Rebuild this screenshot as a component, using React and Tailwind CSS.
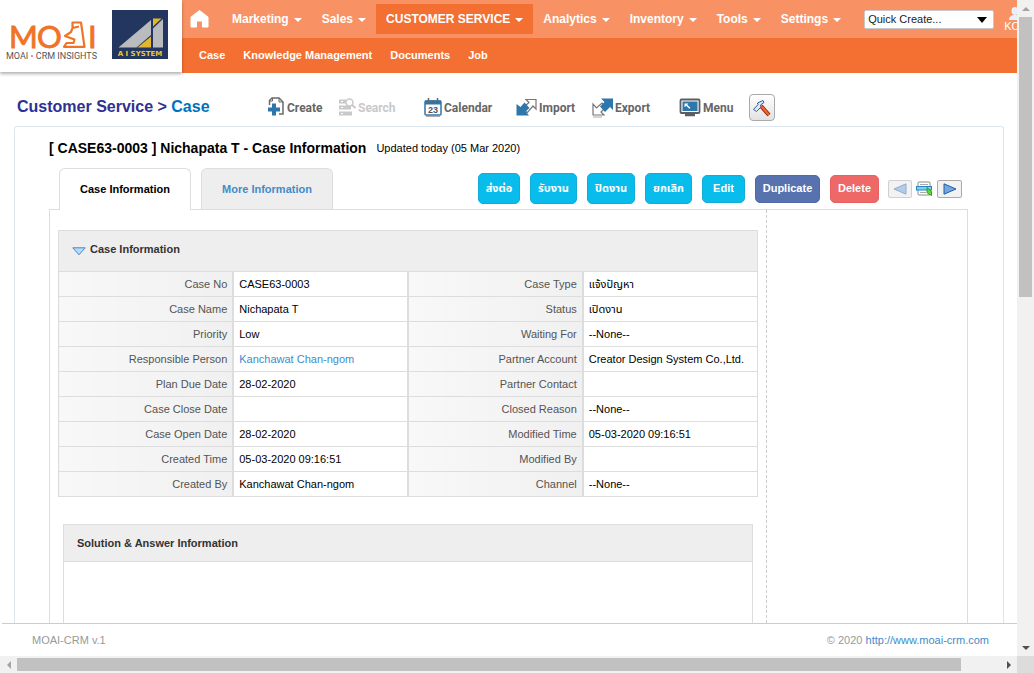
import React from "react";

const NAV = ["Marketing", "Sales", "CUSTOMER SERVICE", "Analytics", "Inventory", "Tools", "Settings"];
const SUBNAV = ["Case", "Knowledge Management", "Documents", "Job"];

const ROWS = [
  ["Case No", "CASE63-0003", "Case Type", "แจ้งปัญหา"],
  ["Case Name", "Nichapata T", "Status", "เปิดงาน"],
  ["Priority", "Low", "Waiting For", "--None--"],
  ["Responsible Person", "Kanchawat Chan-ngom", "Partner Account", "Creator Design System Co.,Ltd."],
  ["Plan Due Date", "28-02-2020", "Partner Contact", ""],
  ["Case Close Date", "", "Closed Reason", "--None--"],
  ["Case Open Date", "28-02-2020", "Modified Time", "05-03-2020 09:16:51"],
  ["Created Time", "05-03-2020 09:16:51", "Modified By", ""],
  ["Created By", "Kanchawat Chan-ngom", "Channel", "--None--"],
];

function MoaiLogo() {
  return (
    <svg width="96" height="44" viewBox="0 0 96 44" className="overflow-visible" role="img" aria-label="MOAI CRM Insights">
      <g fill="#f07427" stroke="#f07427" strokeWidth="0.9" fontFamily="Lato, sans-serif" fontSize="31">
        <text x="4" y="30.500">M</text>
        <text x="32" y="30.500">O</text>
        <text x="83" y="30.500">I</text>
      </g>
      <path
        d="M67.500 10V5.500H76L79.500 29.800H59L61.500 26H68.500L69.500 22.500L60 19L66 15L67.500 11L74 9.500"
        fill="none"
        stroke="#f07427"
        strokeWidth="2.200"
        strokeLinejoin="round"
      />
      <text x="1" y="42" fontFamily="Roboto, sans-serif" fontSize="9" fill="#555">
        MOAI <tspan fill="#f07427">•</tspan> CRM INSIGHTS
      </text>
    </svg>
  );
}

function AiSystemLogo() {
  return (
    <svg width="56" height="50" viewBox="0 0 56 50" role="img" aria-label="A I System">
      <rect width="56" height="49" fill="#22365f" />
      <path d="M6.500 37.500L39 10V25L24.500 37.500Z" fill="#b9bbbe" />
      <path d="M25.500 37.500L39 26.500V37.500Z" fill="#e3b62f" />
      <path d="M41 8.500H49.500L41 16.500Z" fill="#e3b62f" />
      <path d="M41 18.500L51 9V37.500H41Z" fill="#b9bbbe" />
      <text x="28" y="46" textAnchor="middle" fontFamily="'DejaVu Sans', sans-serif" fontWeight="bold" fontSize="7" fill="#f0c433">
        A I SYSTEM
      </text>
    </svg>
  );
}

const ICONS = {
  create: (
    <svg width="18" height="22" viewBox="0 0 18 22" fill="none">
      <path d="M2.500 8V3.500L5 1H12L16 5V17H12" stroke="#6b6b6b" strokeWidth="1.500" />
      <path d="M5.500 1V4H2.500M12 1V5H16" stroke="#6b6b6b" />
      <path d="M5 6.500h4v4h4v4H9v4H5v-4H1v-4h4z" fill="#2d77ad" />
    </svg>
  ),
  search: (
    <svg width="18" height="20" viewBox="0 0 18 20" fill="none">
      <path d="M1 1.500h7v4H1zM1 7.500h12v4H1zM1 13.500h13v4H1z" fill="#c9c9c9" />
      <path d="M3 3.500h2M3 9.500h2M3 15.500h2" stroke="#fff" />
      <circle cx="11.500" cy="4.500" r="3.500" fill="#fff" stroke="#c9c9c9" strokeWidth="1.500" />
      <path d="M14 7L17.500 10" stroke="#c9c9c9" strokeWidth="2" />
    </svg>
  ),
  calendar: (
    <svg width="18" height="20" viewBox="0 0 18 20">
      <rect x="1" y="3" width="16" height="14" rx="1" fill="#fff" stroke="#2d77ad" strokeWidth="1.500" />
      <rect x="1" y="2.500" width="16" height="4" fill="#2d77ad" />
      <path d="M4.500 0v5M9 2v3M13.500 0v5" stroke="#666" strokeWidth="1.500" />
      <text x="9" y="14.500" textAnchor="middle" fontFamily="'Liberation Sans', sans-serif" fontWeight="bold" fontSize="9" fill="#555">
        23
      </text>
      <path d="M2 18.500h14" stroke="#aaa" />
    </svg>
  ),
  import: (
    <svg width="21" height="20" viewBox="0 0 21 20">
      <path d="M10 1.500H20V11L17 8L11 15L8 9L13 4.500Z" fill="#fff" stroke="#777" strokeWidth="1.200" />
      <path d="M8.500 4.500L13.500 10L9.500 13.500L13 17.500H0.500V6L4.500 9Z" fill="#2d77ad" />
    </svg>
  ),
  export: (
    <svg width="21" height="20" viewBox="0 0 21 20">
      <path d="M1 6V17H12L9 14L14 9L10 5L4.500 10Z" fill="#fff" stroke="#777" strokeWidth="1.200" />
      <path d="M9 0.500H21V12L18 9L13 14L8 8.500L12.500 4Z" fill="#2d77ad" />
      <path d="M1 19h9" stroke="#aaa" />
    </svg>
  ),
  menu: (
    <svg width="22" height="20" viewBox="0 0 22 20">
      <rect x="1.500" y="1.500" width="19" height="13.500" rx="1" fill="#fff" stroke="#5b5f63" strokeWidth="1.800" />
      <rect x="3.500" y="3.500" width="15" height="9.500" fill="#2d77ad" />
      <path d="M5.500 5.500h4L8.200 6.700l3.200 3.100-1 1-3.200-3.100-1.700 1.600z" fill="#fff" />
      <path d="M6 17h10" stroke="#5b5f63" strokeWidth="2.500" />
    </svg>
  ),
};

const TOOLS = [
  ["create", "Create"],
  ["search", "Search"],
  ["calendar", "Calendar"],
  ["import", "Import"],
  ["export", "Export"],
  ["menu", "Menu"],
];

function Header() {
  return (
    <header className="flex h-[73px] shrink-0">
      <div className="z-10 flex h-[72px] w-[182px] shrink-0 gap-[11px] bg-white pt-[10px] pl-[5px] shadow-[0_2px_3px_rgba(0,0,0,0.3)]">
        <div className="pt-[7px]"><MoaiLogo /></div>
        <AiSystemLogo />
      </div>
      <div className="min-w-0 flex-1 overflow-hidden font-bold text-white">
        <nav className="flex h-[38px] items-center bg-[#f89264] text-[12px]">
          <a href="#home" aria-label="Home" className="ml-2 w-[32px] shrink-0">
            <svg width="19" height="18" viewBox="0 0 19 18" fill="#fff">
              <path d="M1 7L9.500 0.500L18 7V17H12.500V11H6.500V17H1Z" stroke="#fff" strokeLinejoin="round" />
            </svg>
          </a>
          {NAV.map((n) => (
            <a
              key={n}
              href="#nav"
              className={`flex h-[30px] shrink-0 items-center gap-[5px] px-[10px] ${n === "CUSTOMER SERVICE" ? "bg-[#f37032]" : ""}`}
            >
              {n}
              <span className="mt-px border-x-4 border-t-4 border-x-transparent border-t-white" />
            </a>
          ))}
          <div className="relative ml-[13px] h-[19px] w-[130px] shrink-0">
            <select
              aria-label="Quick Create"
              className="block h-full w-full appearance-none rounded-[2px] border border-[#c9c9c9] bg-white pl-[3px] text-[11px] font-normal text-[#222]"
            >
              <option>Quick Create...</option>
            </select>
            <span className="pointer-events-none absolute top-[7px] right-[7px] border-x-[5px] border-t-[6px] border-x-transparent border-t-black" />
          </div>
          <a href="#user" className="ml-[10px] flex w-[30px] shrink-0 flex-col text-[11px] leading-[12px] font-normal">
            <svg width="18" height="13" viewBox="0 0 18 13" fill="#e4f0fa" className="ml-1">
              <ellipse cx="7" cy="4" rx="3.500" ry="4" />
              <path d="M1 13C1 9 4 8 7 8s6 1 6 5z" />
            </svg>
            KO
          </a>
        </nav>
        <nav className="flex h-[35px] items-center gap-[18px] bg-[#f37032] pl-[17px] text-[11px]">
          {SUBNAV.map((n) => (
            <a key={n} href="#sub">{n}</a>
          ))}
        </nav>
      </div>
    </header>
  );
}

function Toolbar() {
  return (
    <div className="flex shrink-0 items-center pt-[21px] pb-[5px] pl-[17px]">
      <h1 className="w-[250px] shrink-0 pb-[2px] text-[16px] font-bold text-[#2e3192]">
        Customer Service &gt; <a href="#case" className="text-[#0072bc]">Case</a>
      </h1>
      <div className="grid grid-cols-[71px_86px_92px_76px_87px_70px_26px] items-center">
        {TOOLS.map(([k, label]) => (
          <button
            key={k}
            className={`flex items-center gap-[2px] font-[Roboto,sans-serif] text-[12px] font-bold ${k === "search" ? "text-[#c9c9c9]" : "text-[#666]"}`}
          >
            {ICONS[k]}
            {label}
          </button>
        ))}
        <button aria-label="Settings" className="flex h-[27px] w-[26px] items-center justify-center rounded-[4px] border border-[#aaa] bg-gradient-to-b from-white to-[#e2e2e2]">
          <svg width="20" height="20" viewBox="0 0 20 20" fill="none">
            <path d="M9 8L17 17" stroke="#8a1c00" strokeWidth="4" />
            <path d="M9 8L17 17" stroke="#f1642c" strokeWidth="2.400" />
            <path d="M1.500 11.500L6 6.500L5.500 5L11 2.500L12 4.500L8.500 7L9 9L4.500 13.500Z" fill="#dce9f8" stroke="#3c5a94" />
          </svg>
        </button>
      </div>
    </div>
  );
}

const BLUE = "h-[31px] border-[#12acd6] bg-[#08bdec]";
const ACTIONS = [
  ["ส่งต่อ", BLUE + " w-[42px]"],
  ["รับงาน", BLUE + " w-[47px]"],
  ["ปิดงาน", BLUE + " w-[48px]"],
  ["ยกเลิก", BLUE + " w-[47px]"],
  ["Edit", "h-[28px] w-[43px] border-[#12acd6] bg-[#08bdec]"],
  ["Duplicate", "h-[28px] w-[65px] border-[#4f6aa5] bg-[#5872b0]"],
  ["Delete", "h-[28px] w-[49px] border-[#e86060] bg-[#ee6868]"],
];

function TabBar() {
  return (
    <div className="mt-[9px] flex h-[41px] items-center pl-[10px]">
      <div role="tablist" className="flex h-full gap-[10px] font-bold">
        <button role="tab" aria-selected="true" className="relative -mb-px w-[132px] rounded-t-[6px] border border-b-0 border-[#ddd] bg-white">
          Case Information
        </button>
        <button role="tab" aria-selected="false" className="w-[132px] rounded-t-[6px] border border-b-0 border-[#ddd] bg-[#eee] text-[#428bca]">
          More Information
        </button>
      </div>
      <div className="ml-auto flex items-center gap-[10px] font-bold text-white">
        {ACTIONS.map(([label, cls]) => (
          <button key={label} className={`rounded-[5px] border whitespace-nowrap ${cls}`}>{label}</button>
        ))}
      </div>
      <div className="mr-[6px] ml-[9px] flex items-center gap-1">
        <button aria-label="Previous" className="flex h-[18px] w-[24px] items-center justify-center rounded-[2px] border border-[#d0d0d0] bg-[#f2f2f2]">
          <svg width="14" height="12" viewBox="0 0 14 12"><path d="M13 .8V11.200L1 6Z" fill="#b4cbe6" stroke="#8fadd2" /></svg>
        </button>
        <button aria-label="Jump to record">
          <svg width="17" height="16" viewBox="0 0 17 16">
            <rect x="2" y="1" width="12" height="13" rx="1" fill="#fff" stroke="#8b8b8b" />
            <path d="M4 3.500h8M4 11.500h6" stroke="#aaa" />
            <rect x=".5" y="5.500" width="15" height="3.500" fill="#7cd0fb" stroke="#2483c2" />
            <path d="M11 6.500L15.500 10.500V14.500L12.500 13L11 11.500Z" fill="#5fd63c" stroke="#2f9d17" />
          </svg>
        </button>
        <button aria-label="Next" className="flex h-[18px] w-[25px] items-center justify-center rounded-[2px] border border-[#aaa] bg-[#f2f2f2]">
          <svg width="14" height="12" viewBox="0 0 14 12"><path d="M1 .8V11.200L13 6Z" fill="#76a5dc" stroke="#1d5fae" /></svg>
        </button>
      </div>
    </div>
  );
}

function Label({ children }) {
  return (
    <th
      scope="row"
      className="h-[25px] border border-[#ddd] bg-[linear-gradient(90deg,#f8f8f8,#f0f0f0)] pr-[5px] text-right font-normal text-[#545454]"
    >
      {children}
    </th>
  );
}

function Value({ children, link }) {
  return (
    <td className="h-[25px] border border-x-2 border-[#ddd] pl-[5px] last:border-r">
      {link ? <a href="#person" className="text-[#428bca]">{children}</a> : children}
    </td>
  );
}

function CaseInformation() {
  return (
    <section>
      <h2 className="h-[41px] border border-b-0 border-[#ddd] bg-[#eee]">
        <button className="flex h-full items-center gap-1 pb-1 pl-[13px] font-bold text-[#333]">
          <svg width="14" height="9" viewBox="0 0 14 9" className="mt-1">
            <path d="M.8 .8H13.200L7 7.800Z" fill="#b5dcfb" stroke="#4d86c4" />
          </svg>
          Case Information
        </button>
      </h2>
      <table className="w-full table-fixed border-collapse">
        <tbody>
          {ROWS.map(([a, b, c, d]) => (
            <tr key={a}>
              <Label>{a}</Label>
              <Value link={a === "Responsible Person"}>{b}</Value>
              <Label>{c}</Label>
              <Value>{d}</Value>
            </tr>
          ))}
        </tbody>
      </table>
    </section>
  );
}

function VerticalScrollbar() {
  return (
    <div className="flex w-[17px] shrink-0 flex-col items-center bg-[#f1f1f1]" aria-hidden="true">
      <div className="flex h-[17px] shrink-0 items-center"><span className="border-x-4 border-b-4 border-x-transparent border-b-[#a3a3a3]" /></div>
      <div className="flex w-[13px] flex-1 flex-col"><div className="h-[45%] bg-[#c1c1c1]" /></div>
      <div className="flex h-[17px] shrink-0 items-center"><span className="border-x-4 border-t-4 border-x-transparent border-t-[#505050]" /></div>
    </div>
  );
}

function HorizontalScrollbar() {
  return (
    <div className="flex h-[17px] shrink-0 items-center bg-[#f1f1f1]" aria-hidden="true">
      <div className="flex w-[17px] shrink-0 justify-center"><span className="border-y-4 border-r-4 border-y-transparent border-r-[#a3a3a3]" /></div>
      <div className="h-[13px] flex-1"><div className="h-full w-[96%] bg-[#c1c1c1]" /></div>
      <div className="flex w-[17px] shrink-0 justify-center"><span className="border-y-4 border-l-4 border-y-transparent border-l-[#505050]" /></div>
      <div className="h-full w-[17px] shrink-0 bg-[#dcdcdc]" />
    </div>
  );
}

export default function App() {
  return (
    <div className="flex h-screen flex-col bg-white font-['Liberation_Sans','Noto_Sans_Thai',sans-serif] text-[11px] text-black">
      <div className="flex min-h-0 flex-1">
        <div className="flex min-w-0 flex-1 flex-col">
          <Header />
          <Toolbar />
          <main className="mr-[13px] ml-[14px] flex min-h-0 flex-1 flex-col overflow-hidden rounded-t-[3px] border border-b-0 border-[#dde6ee] pr-[35px] pl-[34px]">
            <div className="flex h-[32px] shrink-0 items-center gap-[10px] pt-[10px]">
              <h2 className="text-[14px] font-bold">[ CASE63-0003 ] Nichapata T - Case Information</h2>
              <span className="pt-px">Updated today (05 Mar 2020)</span>
            </div>
            <TabBar />
            <div className="flex min-h-0 flex-1 border border-b-0 border-[#ddd]">
              <div className="flex min-w-0 flex-1 flex-col border-r border-dashed border-[#ccc] px-2 pt-5">
                <CaseInformation />
                <section className="mx-[5px] mt-[27px] flex-1 border border-b-0 border-[#ddd]">
                  <h2 className="flex h-[37px] items-center border-b border-[#ddd] bg-[#eee] pl-[13px] font-bold text-[#333]">
                    Solution &amp; Answer Information
                  </h2>
                </section>
              </div>
              <aside className="w-[200px] shrink-0" />
            </div>
          </main>
          <footer className="ml-[2px] flex h-[33px] shrink-0 items-center justify-between border-t border-[#ccc] pr-[28px] pl-[30px] text-[#999]">
            <span>MOAI-CRM v.1</span>
            <span>
              © 2020 <a href="#moai" className="text-[#428bca]">http://www.moai-crm.com</a>
            </span>
          </footer>
        </div>
        <VerticalScrollbar />
      </div>
      <HorizontalScrollbar />
    </div>
  );
}
